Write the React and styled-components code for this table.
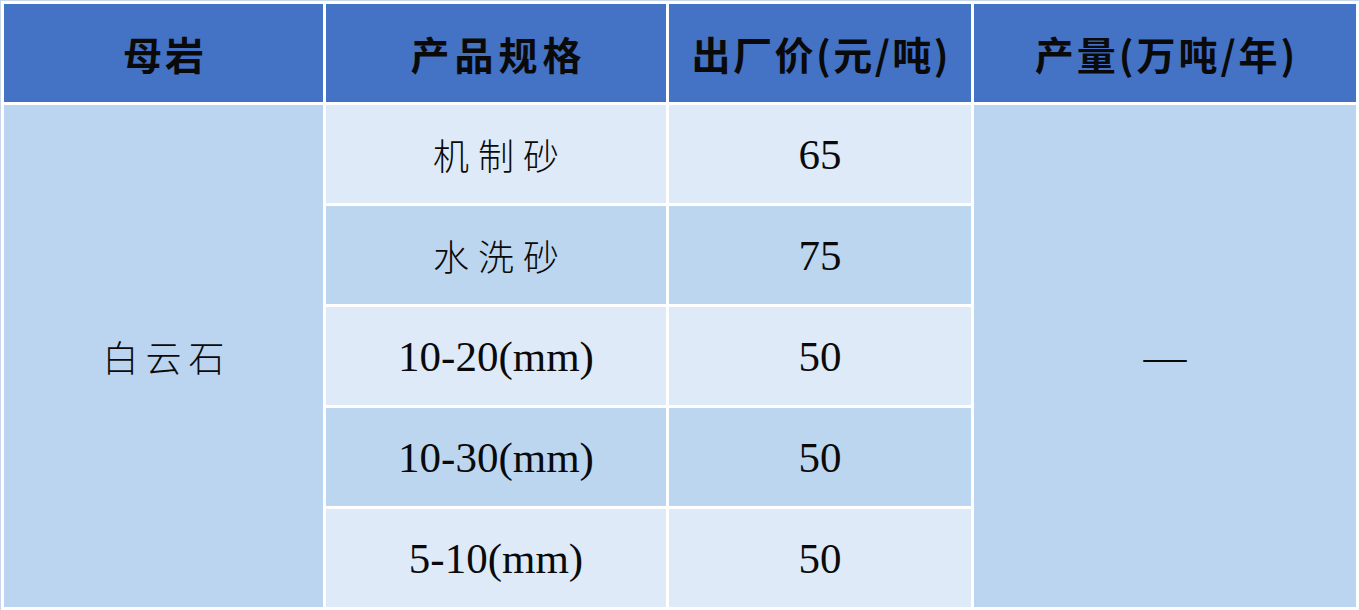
import React from "react";
import styled, { createGlobalStyle } from "styled-components";

const GlobalStyle = createGlobalStyle`
  html, body {
    margin: 0;
    padding: 0;
    background: #ffffff;
  }
  #root {
    width: 1360px;
    height: 610px;
    overflow: hidden;
  }
`;

const Table = styled.div`
  display: grid;
  grid-template-columns: 319px 340px 302px 382px;
  grid-template-rows: repeat(6, 98px);
  gap: 3px;
  padding: 4px;
  width: 1360px;
  box-sizing: border-box;
  background: #ffffff;
  outline: 1px solid #c9d6e8;
  outline-offset: -1px;
`;

const HeadCell = styled.div`
  display: flex;
  align-items: center;
  justify-content: center;
  background: #4472c4;
  color: #0a0a0a;
  font-family: "Noto Sans CJK SC", "Noto Sans", sans-serif;
  font-weight: 700;
  font-size: 39px;
  letter-spacing: ${(p) => p.$spacing || 2}px;
  padding-left: ${(p) => p.$spacing || 2}px;
`;

const Cell = styled.div`
  display: flex;
  align-items: center;
  justify-content: center;
  background: ${(p) => (p.$shade ? "#bdd6ef" : "#deeaf7")};
  color: #0a0a0a;
  font-family: "Liberation Serif", "Noto Sans CJK SC", serif;
  font-size: 43px;
  grid-row: ${(p) => p.$row || "auto"};
  grid-column: ${(p) => p.$col || "auto"};
`;

const MergedCell = styled(Cell)`
  background: #bbd5f0;
`;

const CjkText = styled.span`
  font-family: "Noto Sans CJK SC", sans-serif;
  font-weight: 300;
  font-size: 36px;
  letter-spacing: ${(p) => p.$spacing}px;
  padding-left: ${(p) => p.$spacing}px;
`;

const rows = [
  { spec: "机制砂", cjk: true, price: "65" },
  { spec: "水洗砂", cjk: true, price: "75" },
  { spec: "10-20(mm)", price: "50" },
  { spec: "10-30(mm)", price: "50" },
  { spec: "5-10(mm)", price: "50" },
];

export default function App() {
  return (
    <>
      <GlobalStyle />
      <Table>
        <HeadCell $spacing={3}>母岩</HeadCell>
        <HeadCell $spacing={5}>产品规格</HeadCell>
        <HeadCell $spacing={2.5}>出厂价(元/吨)</HeadCell>
        <HeadCell $spacing={3}>产量(万吨/年)</HeadCell>

        <MergedCell $row="2 / span 5" $col="1">
          <CjkText $spacing={7}>白云石</CjkText>
        </MergedCell>

        {rows.map((r, i) => (
          <React.Fragment key={r.spec}>
            <Cell $shade={i % 2 === 1} $row={i + 2} $col="2">
              {r.cjk ? <CjkText $spacing={9}>{r.spec}</CjkText> : r.spec}
            </Cell>
            <Cell $shade={i % 2 === 1} $row={i + 2} $col="3">
              {r.price}
            </Cell>
          </React.Fragment>
        ))}

        <MergedCell $row="2 / span 5" $col="4">—</MergedCell>
      </Table>
    </>
  );
}
